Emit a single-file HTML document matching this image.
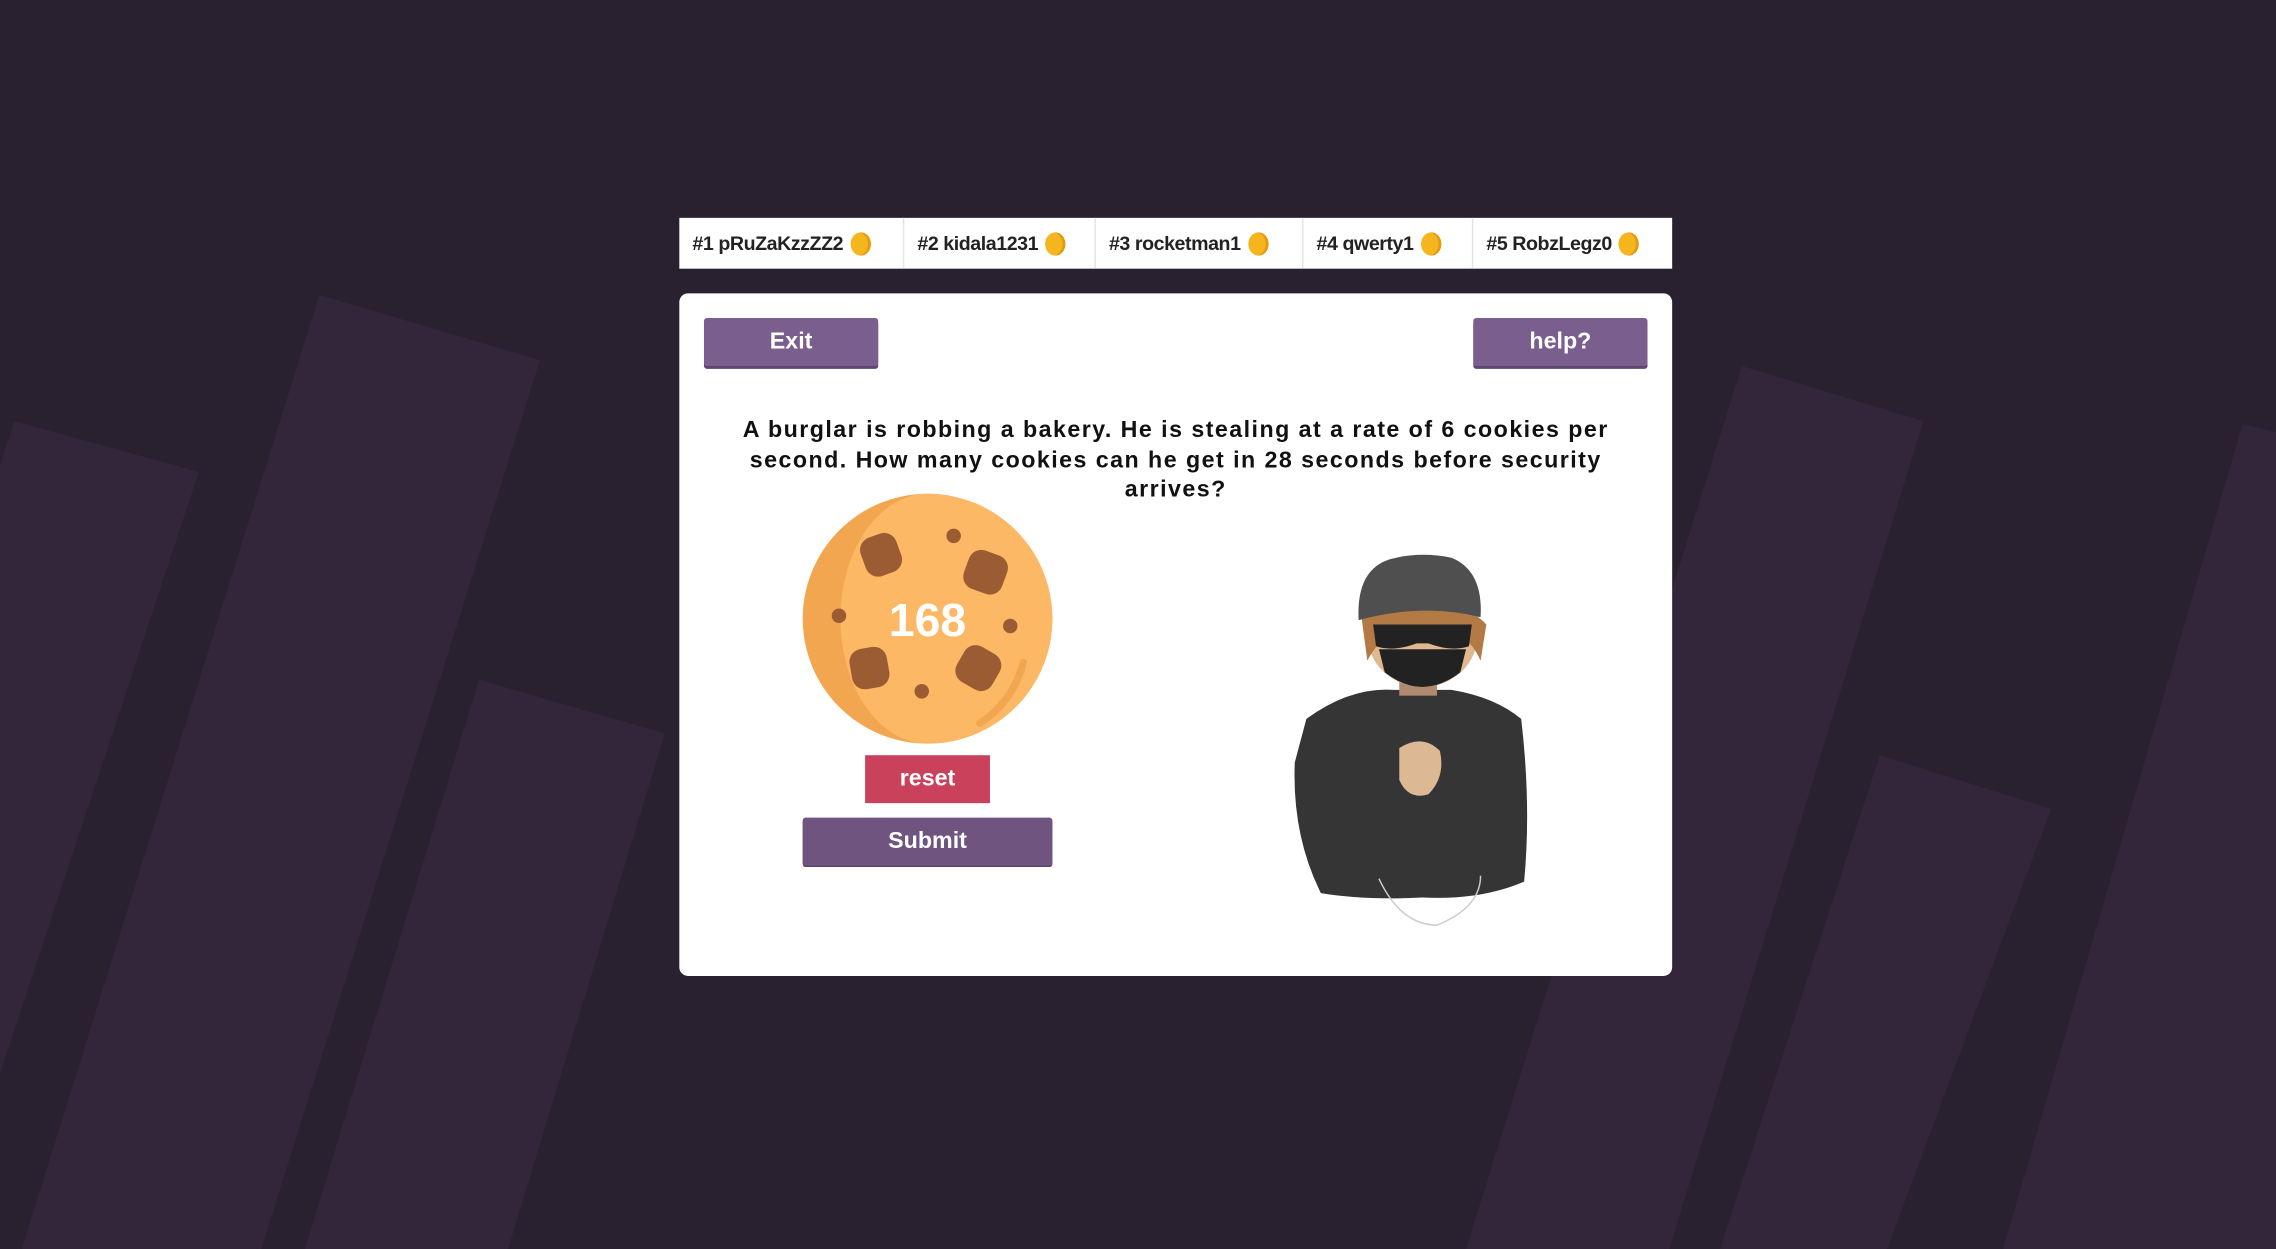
<!DOCTYPE html>
<html><head><meta charset="utf-8"><style>
html,body{margin:0;padding:0;width:2276px;height:1249px;overflow:hidden;background:#2a2130;font-family:"Liberation Sans",sans-serif;}
#s{position:absolute;left:0;top:0;width:1568px;height:860px;transform-origin:0 0;transform:scale(1.45153,1.45233);}
.abs{position:absolute;}
#lb{left:468px;top:150px;width:684px;height:35px;background:#fff;display:flex;align-items:center;font-weight:bold;font-size:13.5px;color:#222;letter-spacing:-0.3px;}
#lb div{height:35px;display:flex;align-items:center;padding-left:9px;box-sizing:border-box;border-right:1px solid #e4e4e4;}
.coin{display:inline-block;width:14px;height:16px;border-radius:50%;background:#f4b51f;margin-left:5px;box-shadow:inset -2px 0 0 #e39b10;}
#card{left:468px;top:202px;width:684px;height:470px;background:#fff;border-radius:6px;}
.btn{position:absolute;background:#7a5e8e;color:#fff;font-weight:bold;font-size:16px;display:flex;align-items:center;justify-content:center;border-radius:2px;box-shadow:0 2px 0 #5d4670;}
#q{left:495px;top:287px;width:630px;text-align:center;font-weight:bold;font-size:16px;line-height:20.5px;color:#111;letter-spacing:1px;}
</style></head><body><div id="s">
<svg class="abs" style="left:0;top:0" width="1568" height="860" viewBox="0 0 1568 860">
<g fill="#33253a">
<polygon points="10,290 137,325 -40,860 -180,860"/>
<polygon points="220,203 372,248 180,860 15,860"/>
<polygon points="330,468 458,505 350,860 210,860"/>
<polygon points="1200,252 1325,290 1150,860 1010,860"/>
<polygon points="1295,520 1413,557 1300,860 1185,860"/>
<polygon points="1545,292 1600,305 1600,860 1380,860"/>
</g>
</svg>
<div id="lb" class="abs">
<div style="width:155px">#1 pRuZaKzzZZ2<span class="coin"></span></div>
<div style="width:132px">#2 kidala1231<span class="coin"></span></div>
<div style="width:143px">#3 rocketman1<span class="coin"></span></div>
<div style="width:117px">#4 qwerty1<span class="coin"></span></div>
<div style="width:137px;border:none">#5 RobzLegz0<span class="coin"></span></div>
</div>
<div id="card" class="abs"></div>
<div class="btn" style="left:485px;top:219px;width:120px;height:33px;">Exit</div>
<div class="btn" style="left:1015px;top:219px;width:120px;height:33px;">help?</div>
<div id="q" class="abs">A burglar is robbing a bakery. He is stealing at a rate of 6 cookies per second. How many cookies can he get in 28 seconds before security arrives?</div>
<svg class="abs" style="left:550px;top:338px" width="180" height="180" viewBox="0 0 180 180">
<circle cx="89" cy="88" r="86" fill="#f2a650"/>
<path d="M89 2 A86 86 0 0 1 89 174 A60 86 0 0 1 89 2Z" fill="#fdb865"/>
<path d="M155 118 Q148 145 125 160" stroke="#f2a650" stroke-width="5" fill="none" stroke-linecap="round"/>
<g fill="#9b5c34">
<rect x="44" y="30" width="26" height="28" rx="9" transform="rotate(-20 57 44)"/>
<rect x="115" y="42" width="28" height="28" rx="9" transform="rotate(20 129 56)"/>
<rect x="36" y="108" width="26" height="28" rx="9" transform="rotate(-10 49 122)"/>
<rect x="110" y="108" width="28" height="28" rx="9" transform="rotate(30 124 122)"/>
<circle cx="107" cy="31" r="5"/><circle cx="28" cy="86" r="5"/><circle cx="146" cy="93" r="5"/><circle cx="85" cy="138" r="5"/>
</g>
<text x="89" y="100" text-anchor="middle" font-family="Liberation Sans" font-weight="bold" font-size="32" fill="#fff">168</text>
</svg>
<div class="btn" style="left:596px;top:520px;width:86px;height:33px;background:#c9415a;box-shadow:none;border-radius:0;">reset</div>
<div class="btn" style="left:553px;top:563px;width:172px;height:33px;background:#6f5480;box-shadow:0 1px 0 #5a4368;">Submit</div>
<svg class="abs" style="left:880px;top:375px" width="190" height="270" viewBox="0 0 190 270">
<path d="M20 120 Q50 98 80 100 L120 100 Q150 105 168 120 Q175 180 170 232 Q140 245 100 243 Q60 245 30 240 Q10 200 12 150Z" fill="#353535"/>
<rect x="84" y="88" width="26" height="16" fill="#b08a70"/>
<ellipse cx="100" cy="62" rx="38" ry="36" fill="#e0b890"/>
<path d="M58 50 Q70 38 100 38 Q130 40 144 55 L140 80 Q130 56 100 56 Q74 56 62 80Z" fill="#b37a45"/>
<path d="M56 52 Q54 14 82 9 Q100 5 120 9 Q142 18 140 50 Q100 40 56 52Z" fill="#4f4f4f"/>
<path d="M66 55 L134 55 L132 70 Q120 74 104 68 L96 68 Q80 74 68 70Z" fill="#222"/>
<path d="M70 72 L130 72 L126 88 Q100 108 74 88Z" fill="#222"/>
<path d="M84 140 Q100 130 112 142 Q116 160 104 172 Q90 176 84 162Z" fill="#dcb894"/>
<path d="M70 230 Q85 262 110 262 Q140 250 140 228" stroke="#ccc" fill="none"/>
</svg>
</div></body></html>
